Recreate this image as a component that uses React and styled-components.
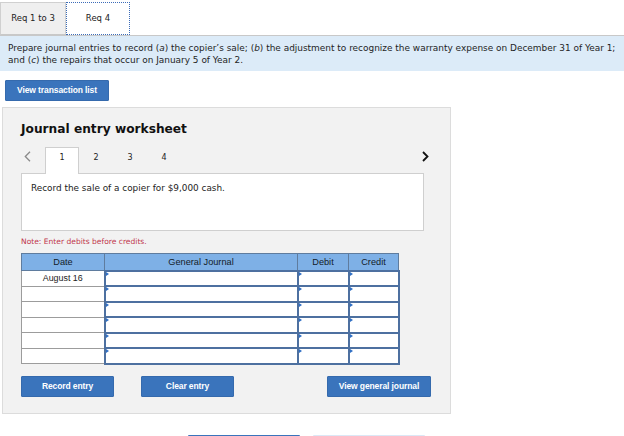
import React from "react";
import styled, { createGlobalStyle } from "styled-components";

const Global = createGlobalStyle`
  html, body { margin: 0; padding: 0; background: #fff; }
  body { font-family: "DejaVu Sans", Verdana, sans-serif; color: #222; width: 624px; height: 436px; overflow: hidden; }
`;

const Page = styled.div`
  width: 624px;
  padding-top: 2px;
`;

const TabBar = styled.div`
  display: flex;
  height: 33px;
`;

const ReqTab = styled.div`
  box-sizing: border-box;
  width: ${(p) => (p.$active ? 64 : 66)}px;
  height: 33px;
  display: flex;
  align-items: center;
  justify-content: center;
  font-size: 8.5px;
  color: #222;
  background: ${(p) => (p.$active ? "#fff" : "#efefef")};
  border: ${(p) => (p.$active ? "1px dotted #3b6cb8" : "1px solid #d0d0d0")};
  border-bottom: ${(p) => (p.$active ? "1px dotted #3b6cb8" : "1px solid #c8c8c8")};
  padding-bottom: 2px;
`;

const Instructions = styled.div`
  background: #dcebf8;
  border-top: 1px solid #c8c8c8;
  padding: 6px 8px 5px 8px;
  font-size: 8.95px;
  line-height: 12px;
  color: #1f1f1f;
`;

const BlueButton = styled.button`
  box-sizing: border-box;
  width: ${(p) => p.$w}px;
  height: 21px;
  background: #3a74bc;
  border: 1px solid #356aad;
  border-radius: 1px;
  color: #fff;
  font-family: "Liberation Sans", Arial, sans-serif;
  font-weight: bold;
  font-size: 8.5px;
  letter-spacing: -0.1px;
  padding: 0;
  cursor: pointer;
`;

const ViewRow = styled.div`
  padding: 7px 0 0 5px;
`;

const Panel = styled.div`
  box-sizing: border-box;
  margin: 6px 0 0 2px;
  width: 449px;
  height: 307px;
  background: #f2f2f2;
  border: 1px solid #dcdcdc;
  padding: 13px 0 0 18px;
`;

const Heading = styled.div`
  font-weight: bold;
  font-size: 12.2px;
  color: #111;
  height: 16px;
  line-height: 16px;
`;

const StepNav = styled.div`
  display: flex;
  align-items: flex-end;
  height: 27px;
  margin-top: 9px;
  width: 408px;
  position: relative;
`;

const Chevron = styled.svg`
  display: block;
`;

const PrevArrow = styled.div`
  width: 24px;
  height: 27px;
  display: flex;
  align-items: flex-start;
  padding: 5px 0 0 3px;
  box-sizing: border-box;
`;

const NextArrow = styled.div`
  position: absolute;
  right: 0;
  top: 5px;
`;

const Step = styled.div`
  box-sizing: border-box;
  width: 34px;
  height: 27px;
  display: flex;
  align-items: center;
  justify-content: center;
  font-size: 8px;
  color: #222;
  padding-bottom: 7px;
  background: ${(p) => (p.$active ? "#fff" : "transparent")};
  border: 1px solid ${(p) => (p.$active ? "#cfcfcf" : "transparent")};
  border-bottom: none;
  margin-bottom: -1px;
  position: relative;
  z-index: 1;
`;

const ContentBox = styled.div`
  box-sizing: border-box;
  width: 403px;
  height: 58px;
  background: #fff;
  border: 1px solid #cfcfcf;
  padding: 9px 9px;
  font-size: 8.9px;
  color: #222;
`;

const Note = styled.div`
  margin-top: 6px;
  font-size: 7.55px;
  color: #c0344a;
  height: 10px;
`;

const Table = styled.table`
  margin-top: 6px;
  border-collapse: collapse;
  font-family: "Liberation Sans", Arial, sans-serif;
  font-size: 8.9px;
  table-layout: fixed;
  width: 377px;
`;

const Th = styled.th`
  height: 16px;
  background: #7eb0e6;
  border: 1px solid #5f7c9e;
  font-weight: normal;
  font-size: 9.2px;
  color: #141c28;
  padding: 0;
  text-align: center;
`;

const DateCell = styled.td`
  height: 14.5px;
  border: 1px solid #9c9c9c;
  background: #fff;
  text-align: center;
  padding: 0;
  color: #222;
`;

const InputCell = styled.td`
  height: 13.5px;
  border: 2px solid #4d70a0;
  background: #fff;
  padding: 0;
  position: relative;
  &::before {
    content: "";
    position: absolute;
    left: 0;
    top: 0;
    border-left: 3px solid #2f6fc4;
    border-top: 2px solid transparent;
    border-bottom: 2px solid transparent;
  }
`;

const Actions = styled.div`
  display: flex;
  margin-top: 11px;
  width: 410px;
`;

const Gap = styled.div`
  width: ${(p) => p.$w}px;
`;

const Spacer = styled.div`
  flex: 1;
`;

const BottomRow = styled.div`
  display: flex;
  gap: 13px;
  padding: 21px 0 0 188px;
`;

const CutButton = styled.div`
  width: ${(p) => p.$w}px;
  height: 10px;
  background: ${(p) => p.$bg};
  border-radius: 1px;
`;

const rows = ["August 16", "", "", "", "", ""];

export default function App() {
  return (
    <Page>
      <Global />
      <TabBar>
        <ReqTab>Req 1 to 3</ReqTab>
        <ReqTab $active>Req 4</ReqTab>
      </TabBar>
      <Instructions>
        Prepare journal entries to record (<i>a</i>) the copier’s sale; (<i>b</i>) the adjustment to recognize the warranty expense on December 31 of Year 1;
        <br />
        and (<i>c</i>) the repairs that occur on January 5 of Year 2.
      </Instructions>
      <ViewRow>
        <BlueButton $w={104}>View transaction list</BlueButton>
      </ViewRow>
      <Panel>
        <Heading>Journal entry worksheet</Heading>
        <StepNav>
          <PrevArrow>
            <Chevron width="7" height="11" viewBox="0 0 7 11">
              <path d="M6 0.8 L1.3 5.5 L6 10.2" fill="none" stroke="#8a8a8a" strokeWidth="1.3" />
            </Chevron>
          </PrevArrow>
          <Step $active>1</Step>
          <Step>2</Step>
          <Step>3</Step>
          <Step>4</Step>
          <NextArrow>
            <Chevron width="7" height="11" viewBox="0 0 7 11">
              <path d="M1 1 L5.5 5.5 L1 10" fill="none" stroke="#111" strokeWidth="1.8" />
            </Chevron>
          </NextArrow>
        </StepNav>
        <ContentBox>Record the sale of a copier for $9,000 cash.</ContentBox>
        <Note>Note: Enter debits before credits.</Note>
        <Table>
          <colgroup>
            <col style={{ width: 83 }} />
            <col style={{ width: 193 }} />
            <col style={{ width: 51 }} />
            <col style={{ width: 50 }} />
          </colgroup>
          <thead>
            <tr>
              <Th>Date</Th>
              <Th>General Journal</Th>
              <Th>Debit</Th>
              <Th>Credit</Th>
            </tr>
          </thead>
          <tbody>
            {rows.map((d, i) => (
              <tr key={i}>
                <DateCell>{d}</DateCell>
                <InputCell />
                <InputCell />
                <InputCell />
              </tr>
            ))}
          </tbody>
        </Table>
        <Actions>
          <BlueButton $w={93}>Record entry</BlueButton>
          <Gap $w={27} />
          <BlueButton $w={93}>Clear entry</BlueButton>
          <Spacer />
          <BlueButton $w={104}>View general journal</BlueButton>
        </Actions>
      </Panel>
      <BottomRow>
        <CutButton $w={112} $bg="#3a74bc" />
        <CutButton $w={112} $bg="#dbe8f6" />
      </BottomRow>
    </Page>
  );
}
